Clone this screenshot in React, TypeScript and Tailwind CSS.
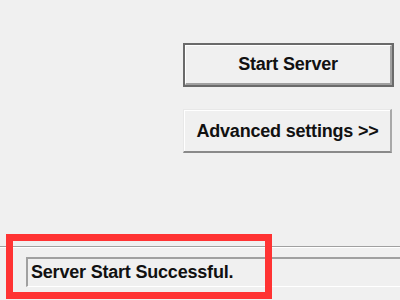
import React from "react";

export default function App() {
  const font = { fontFamily: '"Liberation Sans", Arial, sans-serif' };
  return (
    <div className="relative w-[400px] h-[300px] overflow-hidden bg-[#f0f0f0]" style={font}>
      <div className="flex flex-col pl-[183px] pt-[43px] gap-[22px]">
        <div className="w-[211px] h-[44px] border-2 border-[#6a6a6a] bg-[#f0f0f0] flex">
          <div className="flex-1 border-t border-l border-white border-b-2 border-r-2 border-b-[#a0a0a0] border-r-[#a0a0a0] flex items-center justify-center text-[18px] font-bold text-[#111] tracking-[-0.2px]">
            Start Server
          </div>
        </div>
        <div className="w-[209px] h-[44px] bg-[#f0f0f0] flex border-t border-l border-[#e8e8e8] border-b-2 border-r-2 border-b-[#8a8a8a] border-r-[#a8a8a8]">
          <div className="flex-1 border-t border-l border-white flex items-center justify-center text-[18px] font-bold text-[#111] tracking-[-0.2px]">
            Advanced settings &gt;&gt;
          </div>
        </div>
      </div>
      <div className="mt-[93px] h-[2px] border-t border-[#a0a0a0] border-b border-b-white" />
      <div className="mt-[9px] ml-[26px] h-[30px] border-t-2 border-l-2 border-[#a0a0a0] border-b border-b-white flex items-center pl-[3px] text-[18px] font-bold text-[#111] tracking-[-0.2px]">
        Server Start Successful.
      </div>
      <div className="absolute left-[6px] top-[234px] w-[266px] h-[65px] border-[7px] border-[#ff3333]" />
    </div>
  );
}
